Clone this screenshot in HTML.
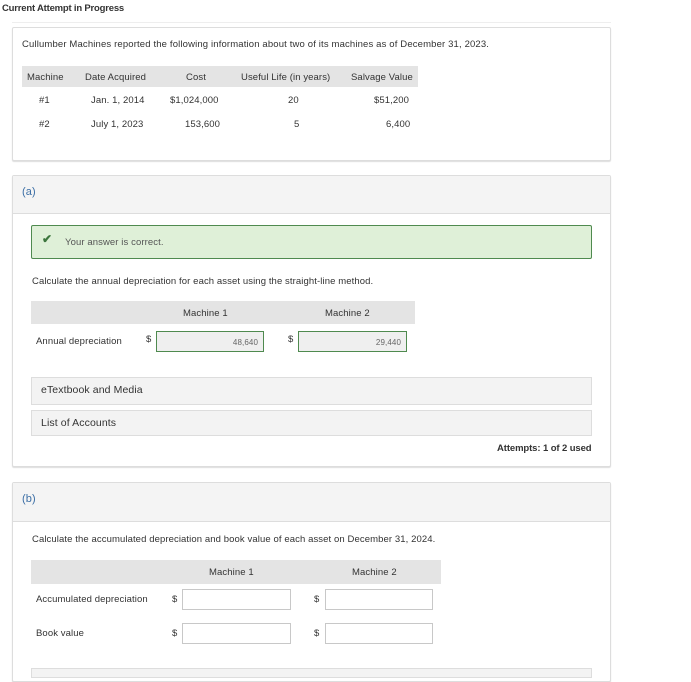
<!DOCTYPE html>
<html><head><meta charset="utf-8"><style>
*{margin:0;padding:0;box-sizing:border-box}
body{width:691px;height:673px;background:#fff;font-family:"Liberation Sans",sans-serif;font-size:9.5px;color:#333;position:relative;overflow:hidden;letter-spacing:0.1px}
.a{position:absolute;white-space:nowrap}
.box{position:absolute;border:1px solid #ddd;border-radius:2px;background:#fff;box-shadow:0 1px 1px #ddd}
.g{position:absolute;background:#e4e4e4}
.inp{position:absolute;height:21px;border:1px solid #c8c8c8;background:#fff}
.ok{background:#efefef;border:1px solid #4f8a4f;text-align:right;padding:6px 5px 0 0;color:#666;font-size:8px}
.acc{position:absolute;background:#f3f3f3;border:1px solid #ddd;font-size:10.5px;padding:6px 9px;color:#333}
</style></head><body>
<div class="a" style="left:2px;top:3px;font-size:9.5px;color:#333;font-weight:bold;letter-spacing:-0.2px">Current Attempt in Progress</div>
<div class="a" style="left:12px;top:22px;width:599px;height:1px;background:#eee"></div>

<div class="box" style="left:12px;top:27px;width:599px;height:134px"></div>
<div class="a" style="left:22px;top:39px;letter-spacing:0.15px">Cullumber Machines reported the following information about two of its machines as of December 31, 2023.</div>
<div class="g" style="left:22px;top:66px;width:396px;height:21px"></div>
<div class="a" style="left:27px;top:72px">Machine</div>
<div class="a" style="left:85px;top:72px">Date Acquired</div>
<div class="a" style="left:186px;top:72px">Cost</div>
<div class="a" style="left:241px;top:72px">Useful Life (in years)</div>
<div class="a" style="left:351px;top:72px">Salvage Value</div>
<div class="a" style="left:39px;top:95px">#1</div>
<div class="a" style="left:91px;top:95px">Jan. 1, 2014</div>
<div class="a" style="left:170px;top:95px">$1,024,000</div>
<div class="a" style="left:288px;top:95px">20</div>
<div class="a" style="left:374px;top:95px">$51,200</div>
<div class="a" style="left:39px;top:119px">#2</div>
<div class="a" style="left:91px;top:119px">July 1, 2023</div>
<div class="a" style="left:185px;top:119px">153,600</div>
<div class="a" style="left:294px;top:119px">5</div>
<div class="a" style="left:386px;top:119px">6,400</div>

<div class="box" style="left:12px;top:175px;width:599px;height:292px"></div>
<div class="a" style="left:13px;top:176px;width:597px;height:38px;background:#f4f4f4;border-bottom:1px solid #ddd"></div>
<div class="a" style="left:22px;top:186px;font-size:11px;color:#3b6ea5">(a)</div>
<div class="a" style="left:31px;top:225px;width:561px;height:34px;background:#dff0d8;border:1px solid #4f8a4f;border-radius:2px"></div>
<div class="a" style="left:42px;top:232px;font-size:12px;color:#3c763d;font-weight:bold">✔</div>
<div class="a" style="left:65px;top:237px;color:#555">Your answer is correct.</div>
<div class="a" style="left:32px;top:276px">Calculate the annual depreciation for each asset using the straight-line method.</div>
<div class="g" style="left:31px;top:301px;width:384px;height:23px"></div>
<div class="a" style="left:183px;top:308px">Machine 1</div>
<div class="a" style="left:325px;top:308px">Machine 2</div>
<div class="a" style="left:36px;top:336px">Annual depreciation</div>
<div class="a" style="left:146px;top:334px">$</div>
<div class="inp ok" style="left:156px;top:331px;width:108px">48,640</div>
<div class="a" style="left:288px;top:334px">$</div>
<div class="inp ok" style="left:298px;top:331px;width:109px">29,440</div>
<div class="acc" style="left:31px;top:377px;width:561px;height:28px">eTextbook and Media</div>
<div class="acc" style="left:31px;top:410px;width:561px;height:26px">List of Accounts</div>
<div class="a" style="left:497px;top:443px;font-weight:bold;color:#333;letter-spacing:-0.1px">Attempts: 1 of 2 used</div>

<div class="box" style="left:12px;top:482px;width:599px;height:200px"></div>
<div class="a" style="left:13px;top:483px;width:597px;height:39px;background:#f4f4f4;border-bottom:1px solid #ddd"></div>
<div class="a" style="left:22px;top:493px;font-size:11px;color:#3b6ea5">(b)</div>
<div class="a" style="left:32px;top:534px">Calculate the accumulated depreciation and book value of each asset on December 31, 2024.</div>
<div class="g" style="left:31px;top:560px;width:410px;height:24px"></div>
<div class="a" style="left:209px;top:567px">Machine 1</div>
<div class="a" style="left:352px;top:567px">Machine 2</div>
<div class="a" style="left:36px;top:594px">Accumulated depreciation</div>
<div class="a" style="left:172px;top:594px">$</div>
<div class="inp" style="left:182px;top:589px;width:109px"></div>
<div class="a" style="left:314px;top:594px">$</div>
<div class="inp" style="left:325px;top:589px;width:108px"></div>
<div class="a" style="left:36px;top:628px">Book value</div>
<div class="a" style="left:172px;top:628px">$</div>
<div class="inp" style="left:182px;top:623px;width:109px"></div>
<div class="a" style="left:314px;top:628px">$</div>
<div class="inp" style="left:325px;top:623px;width:108px"></div>
<div class="a" style="left:31px;top:668px;width:561px;height:10px;background:#f3f3f3;border:1px solid #ddd"></div>
</body></html>
